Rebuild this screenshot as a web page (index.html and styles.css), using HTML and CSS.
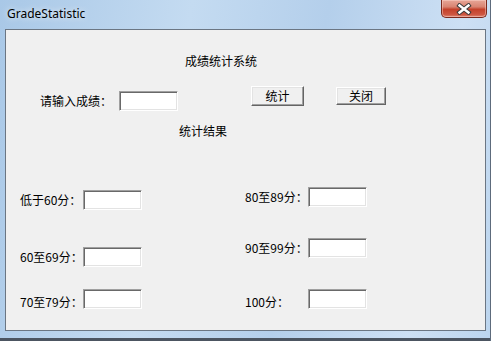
FILE: index.html
```html
<!DOCTYPE html>
<html lang="zh-CN">
<head>
    <meta charset="UTF-8">
    <title>GradeStatistic</title>
    <link rel="stylesheet" href="styles.css">
</head>
<body>
    <div class="window">
        <div class="titlebar">
            <span class="title">GradeStatistic</span>
            <button class="close" type="button" aria-label="关闭">
                <svg width="16" height="12" viewBox="0 0 16 12">
                    <path d="M3.5 2.5 L12.5 9.5 M12.5 2.5 L3.5 9.5" stroke="#3b3b3b" stroke-width="4.4" stroke-linecap="square" fill="none"/>
                    <path d="M3.5 2.5 L12.5 9.5 M12.5 2.5 L3.5 9.5" stroke="#ffffff" stroke-width="2.4" stroke-linecap="square" fill="none"/>
                </svg>
            </button>
        </div>

        <div class="client">
            <div class="heading">成绩统计系统</div>

            <div class="input-row">
                <label class="prompt">请输入成绩：</label>
                <input class="field field-score" type="text">
                <button class="btn btn-count" type="button">统计</button>
                <button class="btn btn-close" type="button">关闭</button>
            </div>

            <div class="subheading">统计结果</div>

            <div class="results">
                <div class="col">
                    <div class="item item-l1"><span class="lbl">低于60分：</span><input class="field" type="text"></div>
                    <div class="item item-l2"><span class="lbl">60至69分：</span><input class="field" type="text"></div>
                    <div class="item item-l3 low"><span class="lbl">70至79分：</span><input class="field" type="text"></div>
                </div>
                <div class="col">
                    <div class="item item-r1"><span class="lbl">80至89分：</span><input class="field" type="text"></div>
                    <div class="item item-r2"><span class="lbl">90至99分：</span><input class="field" type="text"></div>
                    <div class="item item-r3 low"><span class="lbl">100分：</span><input class="field" type="text"></div>
                </div>
            </div>
        </div>
        <div class="frame-bottom"></div>
    </div>
</body>
</html>
```

FILE: styles.css
```css
* { box-sizing: border-box; }
body { margin: 0; font-family: 'Liberation Sans', 'Noto Sans CJK SC', sans-serif; font-size: 12px; color: #000; background: #b9d1ea; }

.window { width: 491px; height: 341px; display: flex; flex-direction: column; padding: 0 4px 0 5px; border-right: 1px solid #5d6b7c; background: linear-gradient(100deg, #a9c8e7 0%, #c4dbf1 35%, #b4cfeb 60%, #cde0f4 85%, #bcd5ee 100%); }

.titlebar { height: 29px; display: flex; align-items: flex-start; justify-content: space-between; }
.title { margin: 6px 0 0 2px; font-family: 'Noto Sans', sans-serif; font-size: 12px; line-height: 16px; text-shadow: 0 0 6px rgba(255,255,255,0.9); }
.close { width: 46px; height: 18px; margin-right: -1px; padding: 0; display: flex; align-items: center; justify-content: center; border: 1px solid #7a2a1e; border-top: none; border-radius: 0 0 5px 5px; background: linear-gradient(#e7a697 0%, #d98472 40%, #c4412b 55%, #cd5641 85%, #de8674 100%); box-shadow: inset 0 0 0 1px rgba(255,220,210,0.45); }

.client { height: 302px; border: 1px solid #6b7683; background: #f0f0f0; padding-top: 23px; font-family: 'Noto Sans CJK SC', sans-serif; }
.heading { margin-left: 179px; line-height: 16px; }
.input-row { display: flex; align-items: flex-start; margin-top: 17px; }
.prompt { width: 79px; margin: 5px 0 0 34px; line-height: 20px; }
.subheading { margin: 12px 0 0 173px; line-height: 16px; }

.field { width: 59px; height: 20px; margin: 0; padding: 1px 3px; font: inherit; background: #fff; border: 1px solid; border-color: #a0a0a0 #ffffff #ffffff #a0a0a0; box-shadow: inset 1px 1px 0 #696969, inset -1px -1px 0 #e3e3e3; }
.field-score { margin-top: 5px; }

.btn { padding: 0; font: inherit; color: #000; background: #f0f0f0; border: 1px solid; border-color: #ffffff #646464 #646464 #ffffff; box-shadow: inset -1px -1px 0 #a0a0a0, inset 1px 1px 0 #e3e3e3; line-height: 16px; }
.btn-count { width: 53px; height: 20px; margin-left: 73px; }
.btn-close { width: 50px; height: 18px; margin: 1px 0 0 32px; }

.results { display: grid; grid-template-columns: 122px 122px; column-gap: 103px; margin: 48px 0 0 14px; }
.col { display: flex; flex-direction: column; }
.item { display: flex; align-items: center; height: 20px; }
.lbl { width: 63px; line-height: 16px; white-space: nowrap; }
.low .lbl { padding-top: 6px; }
.item-l1 { margin-top: 3px; }
.item-l2 { margin-top: 37px; }
.item-l3 { margin-top: 22px; }
.item-r2 { margin-top: 31px; }
.item-r3 { margin-top: 31px; }

.frame-bottom { flex: 1; border-bottom: 3px solid #4c5561; margin: 0 -4px 0 -5px; }
```
